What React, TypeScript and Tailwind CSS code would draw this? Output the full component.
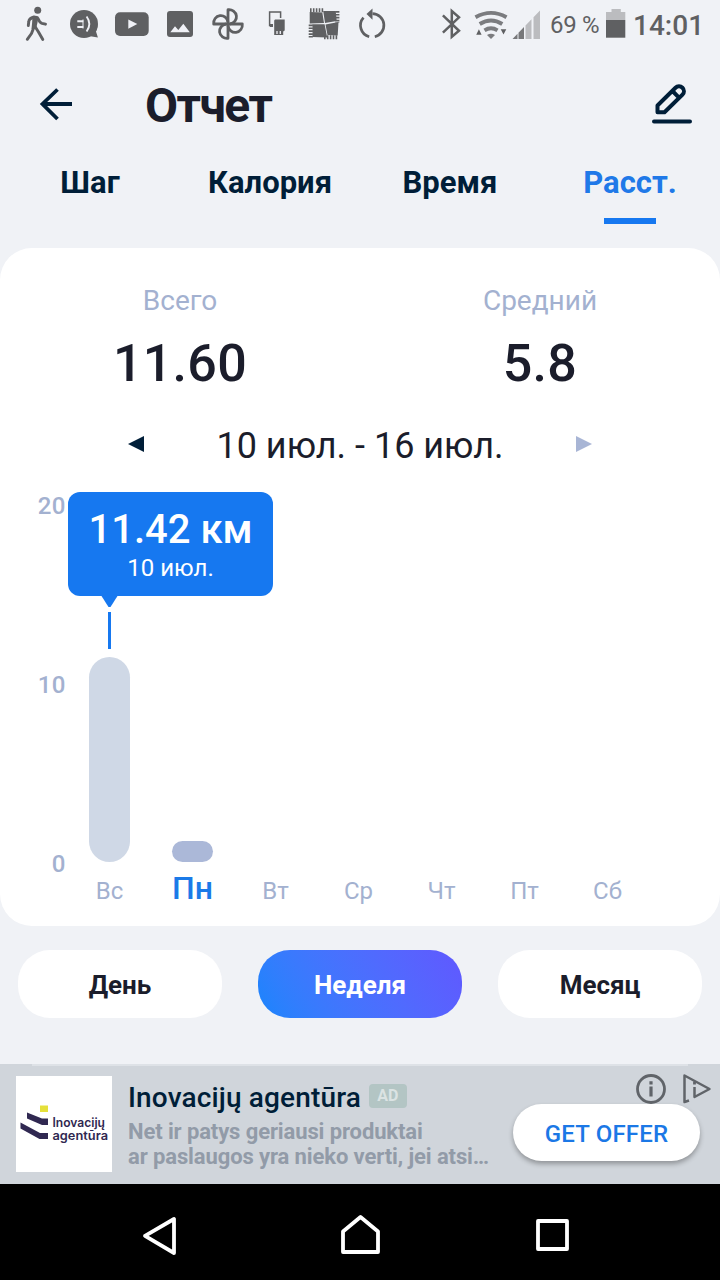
import React from "react";

const tabs = ["Шаг", "Калория", "Время", "Расст."];

const days = [
  { label: "Вс", height: 205 },
  { label: "Пн", height: 21 },
  { label: "Вт", height: 0 },
  { label: "Ср", height: 0 },
  { label: "Чт", height: 0 },
  { label: "Пт", height: 0 },
  { label: "Сб", height: 0 },
];

const Slot: React.FC<{ children: React.ReactNode }> = ({ children }) => (
  <svg width="48" height="50" viewBox="0 0 48 50" fill="none">
    {children}
  </svg>
);

const StatusBar: React.FC = () => (
  <div className="flex h-[50px] items-center pl-3 text-[#5f6062]">
    {/* walking */}
    <Slot>
      <circle cx="25.7" cy="10.3" r="3.5" fill="currentColor" />
      <path d="M20.5 16.5q3-1.5 6 0l-1 6-1.2 5.5-4.8 1 .6-6z" fill="currentColor" />
      <path
        d="M22 17q-5 1.500-5.200 4.500l-.5 4M26 18.500q1.500 4 4 4.800l3.500.9M22 27l-2.500 6.500-4.200 5.800M23 26.500l3.500 5.500 4.300 7.500"
        stroke="currentColor"
        strokeWidth="2.900"
        strokeLinecap="round"
        strokeLinejoin="round"
      />
    </Slot>
    {/* chat */}
    <Slot>
      <circle cx="24" cy="24" r="14" fill="currentColor" />
      <path d="M37.500 24q-.5 6-1.500 7.500l1.900 6-9-1.500z" fill="currentColor" />
      <path d="M17.300 21.200h6M17.300 27h6M26.600 16.500q5.500 7.500 0 15" stroke="#f0f1f6" strokeWidth="1.900" />
      <path d="M23 19.500v9" stroke="#f0f1f6" strokeWidth="1" />
    </Slot>
    {/* video */}
    <Slot>
      <rect x="7" y="12.300" width="33.700" height="23.600" rx="5" fill="currentColor" />
      <path d="M20.300 19.400v9.400l9-4.700z" fill="#f0f1f6" />
    </Slot>
    {/* picture */}
    <Slot>
      <rect x="11" y="11" width="26" height="26" rx="3" fill="currentColor" />
      <path d="M14.300 32.300l4.700-6 3.300 3.700 5-6.200 6.500 8.500z" fill="#f0f1f6" />
    </Slot>
    {/* pinwheel */}
    <Slot>
      {[0, 90, 180, 270].map((angle) => (
        <path
          key={angle}
          d="M24 24V9.700a7.400 7.150 0 0 1 2 14.300"
          transform={`rotate(${angle} 24 24)`}
          stroke="currentColor"
          strokeWidth="2.800"
          strokeLinejoin="round"
        />
      ))}
    </Slot>
    {/* devices */}
    <Slot>
      <path d="M21 25.500h-3.400V12h11v6" stroke="currentColor" strokeWidth="1.500" />
      <path d="M17 24h4v3h-3z" fill="currentColor" />
      <path d="M23 19.500h9.700v11l-1.500 1V35h-9V20.500z" fill="currentColor" />
      <path d="M25 31v3M28.300 31v3" stroke="#f0f1f6" strokeWidth="1.300" />
    </Slot>
    {/* chip */}
    <Slot>
      <path d="M9.700 12l12.600.5 1.700 10.500-14.300.5zM23.200 11h12.500l1 10-11.700 2zM25.500 24.500l13-2.500-.8 13.500-10.200-.5zM12.500 24.200h12.100l2.600 13.300-14.700-.5z" fill="currentColor" />
      <path d="M10 10.300h14.500" stroke="currentColor" strokeWidth="4" strokeDasharray="1.600 1.300" />
      <path d="M37.300 11v12" stroke="currentColor" strokeWidth="4.200" strokeDasharray="1.700 1.200" />
      <path d="M24 37.300h14.500" stroke="currentColor" strokeWidth="4" strokeDasharray="1.600 1.300" />
      <path d="M10.800 24.500v13" stroke="currentColor" strokeWidth="4.200" strokeDasharray="1.700 1.200" />
    </Slot>
    {/* sync */}
    <Slot>
      <path d="M24.500 13.600a11.700 11.700 0 0 1 2.300 23.100M21.200 36.700a11.700 11.700 0 0 1-5.700-19.100" stroke="currentColor" strokeWidth="2.700" />
      <path d="M24.500 8.500v11.200L18.500 14z" fill="currentColor" />
    </Slot>
    <svg className="ml-9" width="112" height="50" viewBox="432 0 112 50" fill="none">
      <path d="M442.900 15.300L459 30.800l-7.200 6V11l7.200 6.300-16.100 15.300" stroke="currentColor" strokeWidth="2.500" />
      <g stroke="#7b7c7f" strokeWidth="3.900">
        <path d="M475.500 17.200q15.500-8.700 31 0" />
        <path d="M479.700 24q11.300-7 22.600 0" />
        <path d="M484.500 30.300q6.500-4 13 0" />
      </g>
      <path d="M487 35q4-2.500 8 0l-4 4z" fill="#7b7c7f" />
      <path d="M476.200 34.700l2.700-5.500 2.700 5.500zM500.700 29.200h5.600l-2.800 5.300z" fill="currentColor" />
      <path d="M512.500 39l5-5.200V39zM518.500 39v-6.300l5.500-5.700v12z" fill="#77787a" />
      <path d="M525.500 39V25.500l6-6.200V39zM533.500 39V17.300l6.500-6.800V39z" fill="#bbbcbf" />
    </svg>
    <span className="ml-[6px] w-[56px] whitespace-nowrap text-[24px] tracking-[-0.3px]">69 %</span>
    <svg width="20" height="50" viewBox="0 0 20 50">
      <path d="M5.500 9h9.300v3H19.300v8H0v-8h5.500z" fill="#bbbcbf" />
      <path d="M0 20h19.300v17.700H0z" fill="currentColor" />
    </svg>
    <span className="ml-[7px] pt-[2px] whitespace-nowrap text-[28px] font-medium">14:01</span>
  </div>
);

const Header: React.FC = () => (
  <header className="flex h-[106px] items-center pt-1 text-[#001e38]">
    <svg className="ml-9" width="40" height="40" viewBox="0 0 40 40" fill="none" stroke="currentColor" strokeWidth="3.800">
      <path d="M36 19H6M21.500 4.500L6.500 19l15 15" />
    </svg>
    <h1 className="ml-[69px] pt-[2px] text-[48px] font-bold tracking-[-1.600px] text-[#1b1d2b]">Отчет</h1>
    <svg className="mr-7 ml-auto" width="40" height="42" viewBox="0 0 40 42" fill="none" stroke="currentColor">
      <path d="M5.500 21.500L23.500 3.800a4.900 4.900 0 0 1 7 6.900L12.500 28.300h-7zM20.500 7l6.700 6.800" strokeWidth="4" strokeLinejoin="round" />
      <path d="M2 37.500h36" strokeWidth="4" strokeLinecap="round" />
    </svg>
  </header>
);

const Tooltip: React.FC = () => (
  <div className="absolute top-0 left-0 w-[205px] text-center text-white">
    <div className="h-[104px] rounded-xl bg-[#1678f0] pt-[14px]">
      <p className="text-[40px] leading-[48px] font-medium">11.42 км</p>
      <p className="text-[24px] leading-[28px]">10 июл.</p>
    </div>
    <svg width="84" height="60" viewBox="0 0 84 60" className="block" fill="#1678f0">
      <path d="M33.500 0h16L42.500 11h-2z" />
      <path d="M40 16h3v37h-3z" />
    </svg>
  </div>
);

const Chart: React.FC = () => (
  <div className="mt-6 flex">
    <div className="flex h-[386px] w-[68px] flex-col justify-between pr-[2px] text-right text-[24px] leading-[28px] font-medium tracking-[0.5px] text-[#a3b1d0]">
      <span>20</span>
      <span>10</span>
      <span>0</span>
    </div>
    <div className="relative flex">
      {days.map((day, i) => (
        <div key={day.label} className="flex h-[420px] w-[83px] flex-col items-center">
          <div className="flex h-[370px] items-end">
            <div
              className={`w-[41px] rounded-[21px] ${i === 0 ? "bg-[#cfd8e6]" : "bg-[#abb8d8]"}`}
              style={{ height: day.height }}
            />
          </div>
          <span
            className={
              i === 1
                ? "mt-[7px] text-[32px] leading-[38px] font-medium text-[#1b7ae8]"
                : "mt-[15px] text-[24px] leading-[28px] text-[#a3b1d0]"
            }
          >
            {day.label}
          </span>
        </div>
      ))}
      <Tooltip />
    </div>
  </div>
);

const AdBanner: React.FC = () => (
  <div className="mt-[46px] h-[120px] bg-[#d0d5db]">
    <div className="mx-8 h-[2px] bg-[#dee2e7]" />
    <div className="flex pt-[10px] pl-4">
      <div className="size-24 shrink-0 bg-white">
        <svg width="96" height="96" viewBox="0 0 96 96" fill="#302851">
          <path d="M24 29.500h8V36h-8z" fill="#e5e03a" />
          <path d="M11 36.500l15 6h6V49h-6l-15-6.500zM4.500 46.500L24 57h8v6h-8.500L4.500 52.500z" />
          <text x="36.500" y="50.500" fontSize="12.500" fontWeight="600" fontFamily="Inter, sans-serif" textLength="52.500" lengthAdjust="spacingAndGlyphs">Inovacijų</text>
          <text x="36.500" y="63.500" fontSize="12.500" fontWeight="600" fontFamily="Inter, sans-serif" textLength="55.500" lengthAdjust="spacingAndGlyphs">agentūra</text>
        </svg>
      </div>
      <div className="ml-4 w-[385px] shrink-0 whitespace-nowrap">
        <div className="flex h-[43px] items-center">
          <span className="text-[28px] font-medium tracking-[0.150px] text-[#001e38]">Inovacijų agentūra</span>
          <span className="-mt-[3px] ml-2 flex h-6 w-[38px] items-center justify-center rounded bg-[#b3c5c4] text-[16px] font-bold text-[#dbe3e3]">
            AD
          </span>
        </div>
        <p className="text-[22px] leading-[25px] font-bold tracking-[-0.110px] text-[#929ba8]">
          Net ir patys geriausi produktai
          <br />
          ar paslaugos yra nieko verti, jei atsi…
        </p>
      </div>
      <div className="relative">
        <button className="mt-7 h-[57px] w-[187px] rounded-full bg-white pt-[2px] text-[24px] font-medium tracking-[0.2px] text-[#1b78e6] shadow-[0_3px_5px_rgba(0,0,0,0.3)]">
          GET OFFER
        </button>
        <svg className="absolute -top-3 left-[119px]" width="84" height="40" viewBox="632 1064 84 40" fill="none" stroke="#606469">
          <circle cx="651" cy="1089" r="13.500" strokeWidth="2.800" />
          <path d="M651 1086.500v10M651 1081.300v3.200" strokeWidth="3.200" />
          <path d="M689 1100.500l-4.500 1.500v-26.500L709.500 1089l-15 8V1087" strokeWidth="2.500" strokeLinejoin="round" />
          <path d="M694.500 1081.500v3" strokeWidth="2.800" />
        </svg>
      </div>
    </div>
  </div>
);

const NavBar: React.FC = () => (
  <nav className="flex h-24 items-center bg-black pl-16">
    <svg width="192" height="96" viewBox="64 0 192 96" fill="none" stroke="white" strokeWidth="3.800" strokeLinejoin="round">
      <path d="M174 35v34l-29-17.200z" />
    </svg>
    <svg width="192" height="96" viewBox="256 0 192 96" fill="none" stroke="white" strokeWidth="3.800" strokeLinejoin="round">
      <path d="M343 68V47.500L360.500 33 378 47.500V68z" />
    </svg>
    <svg width="192" height="96" viewBox="448 0 192 96" fill="none" stroke="white" strokeWidth="3.800" strokeLinejoin="round">
      <path d="M538 37h29v28h-29z" />
    </svg>
  </nav>
);

const App: React.FC = () => {
  return (
    <div className="flex h-[1280px] w-[720px] flex-col overflow-hidden bg-[#f0f2f6] font-[Roboto,sans-serif]">
      <StatusBar />
      <Header />
      <div className="grid h-[92px] grid-cols-4 text-center text-[31px] leading-[36px] font-bold text-[#001e38]">
        {tabs.map((tab, i) => (
          <div key={tab} className={`flex flex-col items-center pt-[9px] ${i === 3 ? "text-[#2079e8]" : ""}`}>
            {tab}
            {i === 3 && <div className="mt-[17px] h-[6px] w-[52px] bg-[#1678f0]" />}
          </div>
        ))}
      </div>

      <main className="h-[678px] rounded-[32px] bg-white pt-9">
        <div className="grid grid-cols-2 text-center">
          <div>
            <p className="text-[28px] leading-[34px] text-[#a3b1d0]">Всего</p>
            <p className="mt-[14px] text-[52px] leading-[64px] font-medium tracking-[0.300px] text-[#1b1d2b]">11.60</p>
          </div>
          <div>
            <p className="text-[28px] leading-[34px] text-[#a3b1d0]">Средний</p>
            <p className="mt-[14px] text-[52px] leading-[64px] font-medium tracking-[0.300px] text-[#1b1d2b]">5.8</p>
          </div>
        </div>
        <div className="mt-7 flex h-11 items-center justify-between px-32">
          <svg className="mb-1" width="16" height="16" viewBox="0 0 16 16" fill="#001e38">
            <path d="M16 0v16L0 8z" />
          </svg>
          <span className="text-[36px] leading-[44px] text-[#1b1d2b]">10 июл. - 16 июл.</span>
          <svg className="mb-1" width="16" height="16" viewBox="0 0 16 16" fill="#a8b5d5">
            <path d="M0 0v16l16-8z" />
          </svg>
        </div>
        <Chart />
      </main>

      <div className="mt-6 grid grid-cols-3 gap-9 px-[18px] text-[26px] font-bold text-[#1b1d2b]">
        <button className="h-[68px] rounded-[32px] bg-white pt-[2px]">День</button>
        <button className="h-[68px] rounded-[32px] bg-linear-60 from-[#1685fc] to-[#6058ff] pt-[2px] text-white">Неделя</button>
        <button className="h-[68px] rounded-[32px] bg-white pt-[2px]">Месяц</button>
      </div>

      <AdBanner />
      <NavBar />
    </div>
  );
};

export default App;
